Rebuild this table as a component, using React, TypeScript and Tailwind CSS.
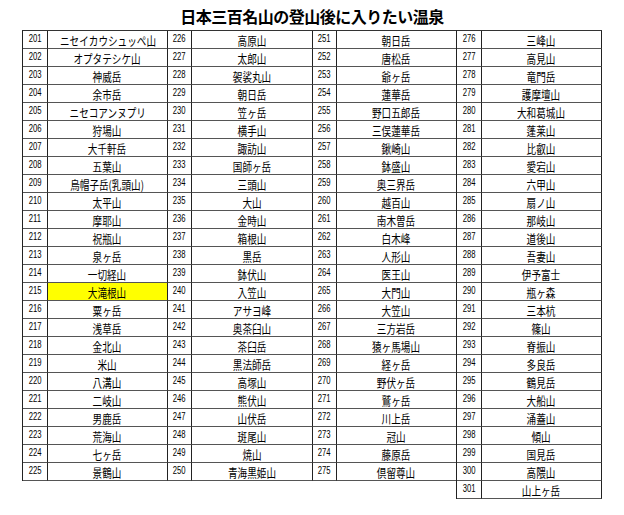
import React from "react";

const groups: { start: number; names: string[] }[] = [
  {
    start: 201,
    names: [
      "ニセイカウシュッペ山", "オプタテシケ山", "神威岳", "余市岳", "ニセコアンヌプリ",
      "狩場山", "大千軒岳", "五葉山", "烏帽子岳(乳頭山)", "太平山",
      "摩耶山", "祝瓶山", "泉ヶ岳", "一切経山", "大滝根山",
      "粟ヶ岳", "浅草岳", "金北山", "米山", "八溝山",
      "二岐山", "男鹿岳", "荒海山", "七ヶ岳", "景鶴山",
    ],
  },
  {
    start: 226,
    names: [
      "高原山", "太郎山", "袈裟丸山", "朝日岳", "笠ヶ岳",
      "横手山", "諏訪山", "国師ヶ岳", "三頭山", "大山",
      "金時山", "箱根山", "黒岳", "鉢伏山", "入笠山",
      "アサヨ峰", "奥茶臼山", "茶臼岳", "黒法師岳", "高塚山",
      "熊伏山", "山伏岳", "斑尾山", "焼山", "青海黒姫山",
    ],
  },
  {
    start: 251,
    names: [
      "朝日岳", "唐松岳", "爺ヶ岳", "蓮華岳", "野口五郎岳",
      "三俣蓮華岳", "鍬崎山", "鉢盛山", "奥三界岳", "越百山",
      "南木曽岳", "白木峰", "人形山", "医王山", "大門山",
      "大笠山", "三方岩岳", "猿ヶ馬場山", "経ヶ岳", "野伏ヶ岳",
      "鷲ヶ岳", "川上岳", "冠山", "藤原岳", "倶留尊山",
    ],
  },
  {
    start: 276,
    names: [
      "三峰山", "高見山", "竜門岳", "護摩壇山", "大和葛城山",
      "蓬莱山", "比叡山", "愛宕山", "六甲山", "扇ノ山",
      "那岐山", "道後山", "吾妻山", "伊予富士", "瓶ヶ森",
      "三本杭", "篠山", "脊振山", "多良岳", "鶴見岳",
      "大船山", "涌蓋山", "傾山", "国見岳", "高隈山",
      "山上ヶ岳",
    ],
  },
];

const numW = ["w-[25px]", "w-[24px]", "w-[24px]", "w-[25px]"];
const nameW = ["w-[120px]", "w-[121px]", "w-[120px]", "w-[120px]"];

export default function App() {
  return (
    <div
      className="w-[624px] h-[515px] bg-white text-black"
      style={{ fontFamily: '"Noto Sans CJK JP", "Liberation Sans", sans-serif' }}
    >
      <div className="h-[30px] flex justify-center items-start pt-[7px]">
        <span className="text-[16px] leading-[18px] font-bold tracking-[-0.5px]">
          日本三百名山の登山後に入りたい温泉
        </span>
      </div>
      <div className="flex items-start pl-[22px]">
        {groups.map((g, gi) => (
          <div
            key={g.start}
            className={
              "flex flex-col border-t border-t-[#333] " +
              (gi === 0 ? "border-l border-l-[#222]" : "") +
              (gi === 3 ? " border-l border-l-[#222] -ml-px" : "")
            }
          >
            {g.names.map((n, i) => {
              const num = g.start + i;
              const yellow = num === 215;
              return (
                <div key={num} className="flex h-[18px]">
                  <div
                    className={
                      numW[gi] +
                      " h-full border-r border-b border-r-[#222] border-b-[#555] flex justify-center items-start pt-[1px]"
                    }
                  >
                    <span
                      className="inline-block text-[11px] leading-[12px] scale-x-[0.7]"
                      style={{ fontFamily: '"Liberation Sans", sans-serif' }}
                    >
                      {num}
                    </span>
                  </div>
                  <div
                    className={
                      nameW[gi] +
                      " h-full border-r border-b border-r-[#222] border-b-[#555] flex justify-center items-center pt-[2px] " +
                      (yellow ? "bg-[#ffff00]" : "")
                    }
                  >
                    <span className="inline-block whitespace-nowrap text-[12px] leading-[13px] scale-x-[0.8]">
                      {n}
                    </span>
                  </div>
                </div>
              );
            })}
          </div>
        ))}
      </div>
    </div>
  );
}
